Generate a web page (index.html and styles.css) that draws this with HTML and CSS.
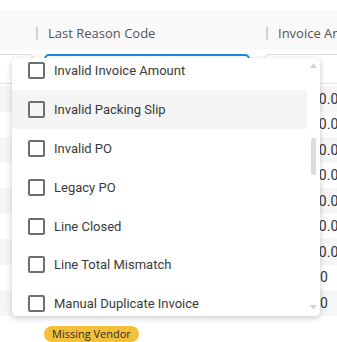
FILE: index.html
```html
<!DOCTYPE html>
<html lang="en">
<head>
    <meta charset="UTF-8">
    <meta name="viewport" content="width=device-width, initial-scale=1.0">
    <title>Invoices - Reason Code Filter</title>
    <link rel="stylesheet" href="styles.css">
</head>
<body>

    <!-- Table -->
    <div class="grid">
        <div class="grid__head">
            <div class="grid__col grid__col--first"></div>
            <div class="grid__col grid__col--reason"><span class="grid__title">Last Reason Code</span></div>
            <div class="grid__col grid__col--amount"><span class="grid__title">Invoice Amount</span></div>
        </div>

        <div class="grid__filters">
            <div class="filter filter--first"></div>
            <div class="filter filter--active"></div>
            <div class="filter filter--amount"></div>
        </div>

        <div class="grid__body">
            <div class="row row--alt"><span class="row__amount">10.00</span></div>
            <div class="row"><span class="row__amount">10.00</span></div>
            <div class="row row--alt"><span class="row__amount">10.00</span></div>
            <div class="row"><span class="row__amount">10.00</span></div>
            <div class="row row--alt"><span class="row__amount">10.00</span></div>
            <div class="row"><span class="row__amount">10.00</span></div>
            <div class="row row--alt"><span class="row__amount">10.00</span></div>
            <div class="row"><span class="row__amount row__amount--int">0</span></div>
            <div class="row row--alt"><span class="row__amount row__amount--int">0</span></div>
            <div class="row row--badge"><span class="badge">Missing Vendor</span></div>
        </div>
    </div>

    <!-- Reason code dropdown -->
    <div class="dropdown">
        <ul class="dropdown__list">
            <li class="option"><span class="option__box"></span>Invalid Invoice Amount</li>
            <li class="option option--hover"><span class="option__box"></span>Invalid Packing Slip</li>
            <li class="option"><span class="option__box"></span>Invalid PO</li>
            <li class="option"><span class="option__box"></span>Legacy PO</li>
            <li class="option"><span class="option__box"></span>Line Closed</li>
            <li class="option"><span class="option__box"></span>Line Total Mismatch</li>
            <li class="option"><span class="option__box"></span>Manual Duplicate Invoice</li>
        </ul>
        <div class="scrollbar">
            <svg class="scrollbar__arrow" width="7" height="5" viewBox="0 0 7 5"><path d="M0 5 L3.5 0.5 L7 5 Z" fill="#d4d4d4"/></svg>
            <div class="scrollbar__track"><div class="scrollbar__thumb"></div></div>
            <svg class="scrollbar__arrow" width="7" height="5" viewBox="0 0 7 5"><path d="M0 0 L3.5 4.5 L7 0 Z" fill="#d4d4d4"/></svg>
        </div>
    </div>

</body>
</html>
```

FILE: styles.css
```css
body {
    margin: 0;
    padding: 0;
    width: 337px;
    height: 342px;
    overflow: hidden;
    background-color: #ffffff;
    font-family: Roboto, 'Liberation Sans', sans-serif;
    position: relative;
}

/* Table */
.grid {
    padding-top: 10px;
    width: 337px;
    overflow: hidden;
}

.grid__head {
    display: flex;
    height: 40px;
    background-color: #f9f9fa;
}

.grid__col {
    display: flex;
    align-items: center;
    padding-top: 7px;
    box-sizing: border-box;
    overflow: hidden;
}

.grid__col--first {
    width: 36px;
}

.grid__col--reason {
    width: 230px;
}

.grid__col--amount {
    flex: 1;
}

.grid__title {
    border-left: 2px solid #d2d2d2;
    padding-left: 10px;
    font-family: 'Open Sans', sans-serif;
    font-size: 13px;
    line-height: 13px;
    color: #555555;
    white-space: nowrap;
}

.grid__filters {
    display: flex;
    height: 36px;
    padding-top: 4px;
    box-sizing: border-box;
}

.filter {
    flex-shrink: 0;
    height: 30px;
    box-sizing: border-box;
    border: 1px solid #dedede;
    border-radius: 5px;
}

.filter--first {
    margin-left: -10px;
    width: 44px;
}

.filter--active {
    margin-left: 10px;
    width: 206px;
    border: 2px solid #1a8be0;
}

.filter--amount {
    margin-left: 14px;
    width: 140px;
}

.row {
    height: 25.5px;
    display: flex;
    align-items: center;
    overflow: hidden;
}

.row--alt {
    background-color: #f6f6f6;
}

.row__amount {
    margin-left: 311px;
    font-size: 14px;
    color: #333333;
    white-space: nowrap;
}

.row__amount--int {
    margin-left: 320px;
}

.row--badge {
    align-items: flex-start;
    padding-top: 10px;
    height: 30px;
}

.badge {
    margin-left: 44px;
    padding: 1px 8px;
    background-color: #f5bf39;
    border-radius: 9px;
    font-family: 'Open Sans', sans-serif;
    font-size: 11px;
    line-height: 14px;
    color: #2e2e2e;
}

/* Dropdown */
.dropdown {
    position: absolute;
    left: 12px;
    top: 58px;
    width: 308px;
    height: 258px;
    background-color: #ffffff;
    border-radius: 4px;
    box-shadow: 0 2px 6px rgba(0, 0, 0, 0.2), 0 0 1px rgba(0, 0, 0, 0.15);
    display: flex;
    overflow: hidden;
}

.dropdown__list {
    flex: 1;
    list-style: none;
    margin: -6.5px 0 0 0;
    padding: 0;
}

.option {
    height: 38.8px;
    display: flex;
    align-items: center;
    gap: 9px;
    padding-left: 16px;
    font-size: 13px;
    color: #3a3a3a;
}

.option--hover {
    background-color: #f5f5f5;
}

.option__box {
    width: 17px;
    height: 17px;
    box-sizing: border-box;
    border: 2px solid #6e6e6e;
    border-radius: 2px;
}

.scrollbar {
    width: 13px;
    display: flex;
    flex-direction: column;
    align-items: center;
    padding: 5px 0 6px;
    box-sizing: border-box;
}

.scrollbar__track {
    flex: 1;
    width: 5px;
    padding-top: 70px;
}

.scrollbar__thumb {
    height: 37px;
    background-color: #dcdcdc;
    border-radius: 2px;
}
```
